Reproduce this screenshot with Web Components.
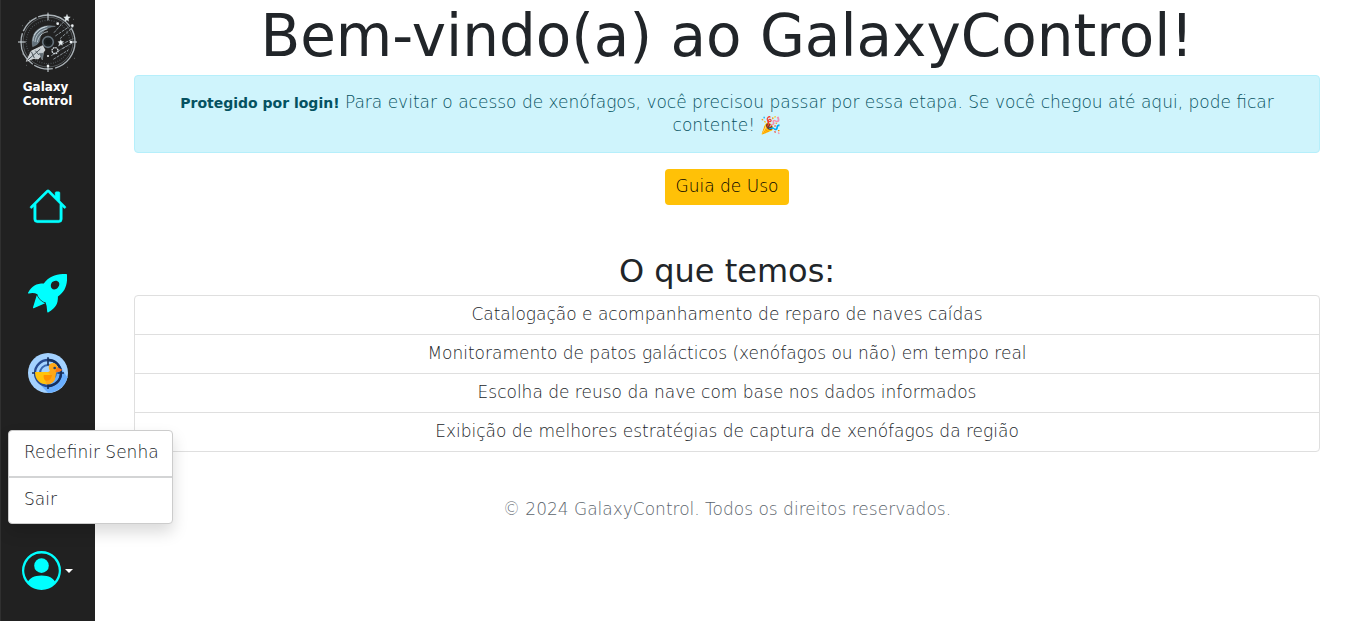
<!DOCTYPE html>
<html lang="pt-BR">
<head>
<meta charset="utf-8">
<meta name="viewport" content="width=device-width, initial-scale=1">
<title>GalaxyControl</title>
<style>
body { margin: 0; background: #fff; color: #212529; font: 200 17px/23px "DejaVu Sans", sans-serif; }
</style>
</head>
<body>
<galaxy-app></galaxy-app>
<script>
const define = (name, html) => {
  const template = document.createElement('template');
  template.innerHTML = html;
  customElements.define(name, class extends HTMLElement {
    constructor() {
      super();
      this.attachShadow({ mode: 'open' }).append(template.content.cloneNode(true));
    }
  });
};

define('galaxy-logo', `
<style>
:host { display: block; }
a { display: flex; flex-direction: column; align-items: center; color: #fff; text-decoration: none; font-size: 12px; line-height: 14px; font-weight: 700; }
svg { width: 60px; height: 60px; margin-bottom: 8px; }
</style>
<a href="#">
<svg viewBox="54 34 180 180" fill="none" stroke="#d5dde2" aria-hidden="true">
  <circle cx="144" cy="124" r="81" stroke-width="4" stroke="#aab2b7" stroke-dasharray="105 7 58 5"/>
  <circle cx="144" cy="124" r="75" stroke-width="2" stroke="#6c7479"/>
  <circle cx="144" cy="124" r="65" stroke-width="4" stroke="#596167" stroke-dasharray="2 5"/>
  <path d="M98 138C90 96 119 68 166 77c-29 3-44 17-47 43-3 10-13 15-21 18z" fill="#63727c" stroke="#a4b0b8"/>
  <path d="M99 122c1-24 19-41 43-45M105 124c2-22 17-36 37-39M112 125c3-18 15-30 32-32M102 103c8-13 20-21 34-24" stroke="#dce9ee" stroke-width="2"/>
  <circle cx="144" cy="124" r="16" stroke="#65717a" stroke-width="5" fill="#15191b"/>
  <circle cx="144" cy="124" r="10" stroke="#252d31" stroke-width="2"/>
  <path d="M54 124h23m134 0h20M144 36v23m0 133v22" stroke-width="3"/>
  <path d="M162 96l34-38M166 106l46-31M180 114l40-35M174 136l46-22M188 144l33-20M154 165l43-28M160 176l45-28" stroke="#899298" stroke-width="3" stroke-dasharray="9 3"/>
  <path d="M201 41l3 7 7 1-6 5 1 8-5-4-6 4 1-8-5-5 7-1zM182 117l3 5 6 1-5 4 1 7-5-3-5 3 1-7-4-4 6-1z" fill="#e8eef0"/>
  <circle cx="165" cy="150" r="9" stroke-width="4" stroke-dasharray="5 2"/>
  <g fill="#eef2f3" stroke="none"><circle cx="173" cy="69" r="4"/><circle cx="213" cy="124" r="4"/><circle cx="217" cy="75" r="4"/><circle cx="144" cy="196" r="4"/><circle cx="144" cy="166" r="3"/></g>
  <path d="M79 182l15-31 34-16 7 13-20 27-13-2z" fill="#c8cfd3" stroke="#f0f3f4" stroke-width="2"/>
  <path d="M82 179l39-34M94 153l9 19M106 150l11 13" stroke="#4a5359" stroke-width="3"/>
  <path d="M115 157l12 21 4-22z" fill="#636e75" stroke="#d5dde2"/>
  <path d="M67 75h1m11 119h1M88 60h1m114 140h1m18-27h1M68 160h1m152-104h1" stroke-width="3"/>
</svg>
<span>Galaxy<br>Control</span>
</a>`);

define('side-link', `
<style>
:host { display: block; }
a { display: flex; align-items: center; justify-content: center; height: 79px; color: #0ff; }
</style>
<a href="#"><slot></slot></a>`);

define('user-menu', `
<style>
:host { display: block; position: relative; }
.toggle { display: flex; align-items: center; gap: 4px; margin: 0 0 0 22px; padding: 0; border: 0; background: none; color: #0ff; cursor: pointer; }
.toggle svg { width: 39px; height: 39px; }
.caret { border: 4px solid transparent; border-top-color: #fff; border-bottom: 0; }
.menu { position: absolute; left: 8px; bottom: 66px; z-index: 2; width: 165px; box-sizing: border-box; border: 1px solid #ccc; border-radius: 4px; background: #fff; box-shadow: 0 8px 16px rgba(0,0,0,.15); }
.menu a { display: block; padding: 10px 15px 12px; color: #212529; text-decoration: none; white-space: nowrap; }
.menu a + a { border-top: 2px solid #d3d4d5; }
</style>
<nav class="menu" aria-label="Conta"><a href="#">Redefinir Senha</a><a href="#">Sair</a></nav>
<button class="toggle" type="button" aria-label="Menu do usuário" aria-expanded="true">
<svg viewBox="0 0 16 16" fill="currentColor"><path d="M11 6a3 3 0 1 1-6 0 3 3 0 0 1 6 0z"/><path fill-rule="evenodd" d="M0 8a8 8 0 1 1 16 0A8 8 0 0 1 0 8zm8-7a7 7 0 0 0-5.468 11.37C3.242 11.226 4.805 10 8 10s4.757 1.225 5.468 2.37A7 7 0 0 0 8 1z"/></svg>
<span class="caret"></span>
</button>`);

define('side-bar', `
<style>
:host { display: flex; flex-direction: column; box-sizing: border-box; width: 95px; min-height: 100vh; padding: 12px 0 31px; background: #212121; box-shadow: inset 1px 0 #303030; }
galaxy-logo { margin-bottom: 58px; }
nav { flex: 1; }
side-link:first-child { margin-bottom: 9px; }
svg { display: block; }
</style>
<galaxy-logo></galaxy-logo>
<nav aria-label="Principal">
<side-link><svg width="38" height="38" viewBox="0 0 16 16" fill="currentColor" stroke="currentColor" stroke-width=".2" role="img" aria-label="Início"><path fill-rule="evenodd" d="M8.707 1.5a1 1 0 0 0-1.414 0L.646 8.146a.5.5 0 0 0 .708.708L2 8.207V13.5A1.5 1.5 0 0 0 3.5 15h9a1.5 1.5 0 0 0 1.5-1.5V8.207l.646.647a.5.5 0 0 0 .708-.708L13 5.793V2.5a.5.5 0 0 0-.5-.5h-1a.5.5 0 0 0-.5.5v1.293L8.707 1.5ZM13 7.207V13.5a.5.5 0 0 1-.5.5h-9a.5.5 0 0 1-.5-.5V7.207l5-5 5 5Z"/></svg></side-link>
<side-link><svg width="39" height="39" viewBox="82 315 116 116" fill="currentColor" role="img" aria-label="Naves"><path fill-rule="evenodd" d="M196 315Q198 315 198 318C200 347 192 367 171 382C171 404 166 414 143 429Q139 431 139 426Q139 410 134 399C124 398 112 386 110 375Q99 370 85 373Q80 373 83 369C94 350 106 343 129 343C145 321 167 314 196 315ZM152 342C147 351 151 361 160 361C170 361 178 348 174 340C169 332 156 334 152 342Z"/><path d="M108 378Q117 396 133 402L99 417Q96 418 97 414Z"/></svg></side-link>
<side-link><svg width="40" height="40" viewBox="84 548 120 120" fill="none" role="img" aria-label="Patos"><circle cx="144" cy="608" r="60" fill="#a4d2ff"/><path d="M184 594l18 27c-6 26-30 46-58 47l-34-37z" fill="#6aafff"/><circle cx="144" cy="608" r="39" stroke="#274b92" stroke-width="7"/><circle cx="144" cy="608" r="24" stroke="#3867b1" stroke-width="6"/><path d="M144 569a39 39 0 0 1 0 78" stroke="#17305e" stroke-width="7"/><path d="M144 561v24m0 45v26M96 608h20m56 0h20" stroke="#17305e" stroke-width="5"/><path d="M105 605h39q10-1 3-10-3-14 11-16c10 0 15 6 15 15 0 10-7 13-7 23 0 15-10 25-27 25-19 0-34-14-34-37z" fill="#ffc30c"/><path d="M144 605q10-1 3-10-3-14 11-16c10 0 15 6 15 15 0 10-7 13-7 23 0 15-10 25-27 25 0-13-12-18-7-24h22z" fill="#ffa719"/><path d="M131 614h25q-2 17-16 17c-7 0-9-7-9-17z" fill="#ff9100"/><path d="M171 590l16 8q-7 9-21 6z" fill="#ff7816"/><circle cx="164" cy="593" r="4" fill="#27446d"/></svg></side-link>
</nav>
<user-menu></user-menu>`);

define('info-alert', `
<style>
:host { display: block; padding: 15px 40px; border: 1px solid #b6effb; border-radius: 4px; background: #cff4fc; color: #055160; text-align: center; }
</style>
<slot></slot>`);

define('feature-list', `
<style>
:host { display: block; border: 1px solid #dfdfdf; border-radius: 4px; }
ul { margin: 0; padding: 0; list-style: none; }
li { padding: 7px 16px 8px; text-align: center; }
li + li { border-top: 1px solid #dfdfdf; }
</style>
<ul>
<li>Catalogação e acompanhamento de reparo de naves caídas</li>
<li>Monitoramento de patos galácticos (xenófagos ou não) em tempo real</li>
<li>Escolha de reuso da nave com base nos dados informados</li>
<li>Exibição de melhores estratégias de captura de xenófagos da região</li>
</ul>`);

define('galaxy-app', `
<style>
:host { display: grid; grid-template-columns: auto minmax(0, 1fr); min-height: 100vh; }
main { padding: 0 28px 0 39px; text-align: center; }
h1 { margin: 0; padding: 5px 0 7px; font-size: 58px; line-height: 63px; font-weight: 400; }
strong { font-weight: 700; font-size: 14px; line-height: 16px; }
button { display: block; margin: 16px auto 47px; height: 36px; padding: 0 11px 2px; border: 0; border-radius: 4px; background: #ffc107; color: #000; font: inherit; }
h2 { margin: 0; padding-bottom: 4px; font-size: 32px; line-height: 39px; font-weight: 400; }
footer { padding-top: 46px; color: #5c656d; }
</style>
<side-bar></side-bar>
<main>
<h1>Bem-vindo(a) ao GalaxyControl!</h1>
<info-alert><strong>Protegido por login!</strong> Para evitar o acesso de xenófagos, você precisou passar por essa etapa. Se você chegou até aqui, pode ficar contente! 🎉</info-alert>
<button type="button">Guia de Uso</button>
<h2>O que temos:</h2>
<feature-list></feature-list>
<footer>© 2024 GalaxyControl. Todos os direitos reservados.</footer>
</main>`);
</script>
</body>
</html>
